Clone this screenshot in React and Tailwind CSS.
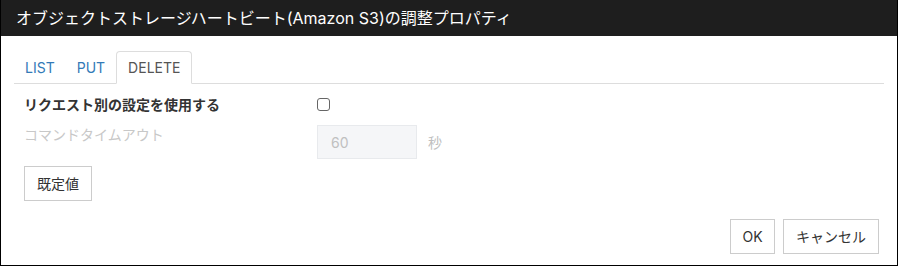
export default function App() {
  const font = { fontFamily: 'Inter, "Noto Sans CJK JP", sans-serif' };
  return (
    <div className="w-[898px] h-[266px] bg-white border-x border-b border-black flex flex-col text-[#333]" style={font}>
      <div className="h-[36px] bg-[#1e1e1e] text-white text-[16px] flex items-center pl-[15px] shrink-0">
        オブジェクトストレージハートビート(Amazon S3)の調整プロパティ
      </div>
      <div className="mt-[15px] mx-[13px] border-b border-[#ddd] flex h-[33px] text-[14px]">
        <div className="px-[11px] flex items-center text-[#337ab7]">LIST</div>
        <div className="px-[11px] flex items-center text-[#337ab7]">PUT</div>
        <div className="px-[11px] flex items-center text-[#555] border border-[#ddd] border-b-white rounded-t-[4px] bg-white -mb-px">DELETE</div>
      </div>
      <div className="pl-[23px] pr-[18px] flex flex-col text-[14px]">
        <div className="flex items-center mt-[10px] h-[20px]">
          <div className="w-[293px] font-bold text-[#333]">リクエスト別の設定を使用する</div>
          <div className="w-[13px] h-[13px] border border-[#666] rounded-[3px] bg-white" />
        </div>
        <div className="flex items-start mt-[11px]">
          <div className="w-[293px] text-[#c8c8c8] leading-[20px] pt-0">コマンドタイムアウト</div>
          <div className="w-[100px] h-[34px] bg-[#f5f6f8] border border-[#e8eaed] flex items-center pl-[13px] text-[#c0c0c0]">60</div>
          <div className="ml-[11px] h-[34px] flex items-center text-[#c0c0c0]">秒</div>
        </div>
        <div className="mt-[7px]">
          <button className="w-[68px] h-[35px] border border-[#ccc] bg-white text-[#333] text-[14px]">既定値</button>
        </div>
        <div className="flex justify-end gap-[8px] mt-[18px]">
          <button className="w-[45px] h-[35px] border border-[#ccc] bg-white text-[#333] text-[14px]">OK</button>
          <button className="w-[96px] h-[35px] border border-[#ccc] bg-white text-[#333] text-[14px]">キャンセル</button>
        </div>
      </div>
    </div>
  );
}
